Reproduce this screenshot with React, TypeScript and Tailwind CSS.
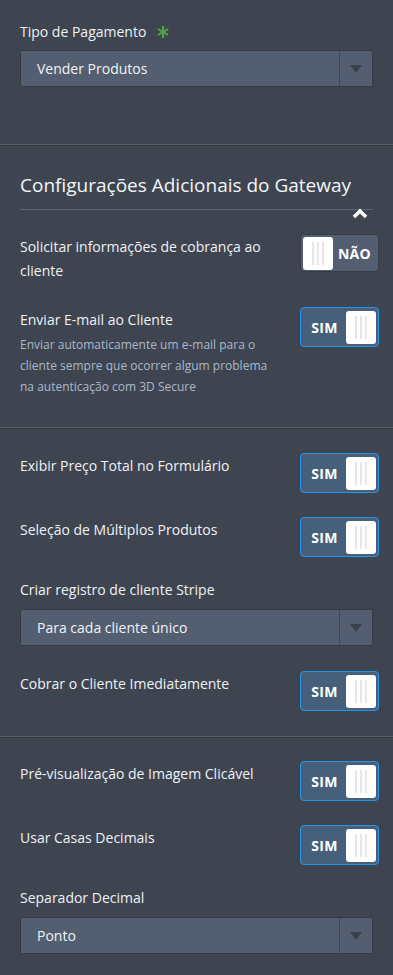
import React from "react";

const font = { fontFamily: "'Open Sans', 'Noto Sans', sans-serif" };

function Star() {
  return (
    <svg width="12" height="12" viewBox="0 0 12 12" className="ml-[11px] inline-block">
      <g stroke="#55a743" strokeWidth="2" strokeLinecap="square">
        <line x1="6" y1="1" x2="6" y2="11" />
        <line x1="1.7" y1="3.5" x2="10.3" y2="8.5" />
        <line x1="1.7" y1="8.5" x2="10.3" y2="3.5" />
      </g>
    </svg>
  );
}

function Select({ value }: { value: string }) {
  return (
    <div className="flex h-[37px] items-stretch rounded-[2px] border border-[#353b45] bg-[#535e70]">
      <div className="flex flex-1 items-center pl-4 text-[14px] text-[#f1f3f6]">{value}</div>
      <div className="flex w-[33px] items-center justify-center border-l border-[#3f4653]">
        <svg width="12" height="8" viewBox="0 0 12 8">
          <path d="M0 0h12L6 8z" fill="#39404a" />
        </svg>
      </div>
    </div>
  );
}

function Knob() {
  return (
    <div className="flex h-[33px] w-[30px] items-center justify-center gap-[3px] rounded-[3px] bg-white">
      <span className="h-[23px] w-[2px] bg-[#e6e6e6]" />
      <span className="h-[23px] w-[2px] bg-[#e6e6e6]" />
      <span className="h-[23px] w-[2px] bg-[#e6e6e6]" />
    </div>
  );
}

function Toggle({ on }: { on: boolean }) {
  if (on) {
    return (
      <div className="-mr-[6px] flex h-[40px] w-[79px] shrink-0 items-center rounded-[4px] border border-[#2596ea] bg-[#465f7b] p-[2px]">
        <span className="flex-1 text-center text-[14px] font-bold tracking-wide text-white">SIM</span>
        <Knob />
      </div>
    );
  }
  return (
    <div className="-mr-[6px] flex h-[38px] w-[79px] shrink-0 items-center rounded-[4px] border border-[#363c46] bg-[#535e70] p-[2px]">
      <Knob />
      <span className="flex-1 text-center text-[14px] font-bold tracking-wide text-white">NÃO</span>
    </div>
  );
}

function Row({ label, desc, on }: { label: string; desc?: string; on: boolean }) {
  return (
    <div className="flex items-start justify-between gap-4">
      <div className="mt-px flex-1">
        <div className="text-[14px] leading-6 text-[#eef1f5]">{label}</div>
        {desc && <div className="mt-[2px] text-[12px] leading-[21px] text-[#aab7cc]">{desc}</div>}
      </div>
      <Toggle on={on} />
    </div>
  );
}

function Divider() {
  return (
    <div>
      <div className="h-px bg-[#545c68]" />
      <div className="h-px bg-[#343a43]" />
    </div>
  );
}

export default function App() {
  return (
    <div className="min-h-[975px] w-[393px] bg-[#3e4551]" style={font}>
      <div className="px-5 pt-[22px] pb-[57px]">
        <div className="flex items-center text-[14px] leading-5 text-[#eef1f5]">
          Tipo de Pagamento
          <Star />
        </div>
        <div className="mt-2">
          <Select value="Vender Produtos" />
        </div>
      </div>
      <Divider />

      <div className="px-5 pt-[25px] pb-[30px]">
        <div className="relative border-b border-[#5a6575] pb-[10px]">
          <h2 className="text-[19px] leading-7 text-[#f3f5f8]">Configurações Adicionais do Gateway</h2>
          <svg width="16" height="11" viewBox="0 0 16 11" className="absolute -bottom-[10px] right-[5px]">
            <path d="M2 9l6-6 6 6" fill="none" stroke="#ffffff" strokeWidth="3.5" />
          </svg>
        </div>
        <div className="mt-[24px] flex flex-col gap-[24px]">
          <Row label="Solicitar informações de cobrança ao cliente" on={false} />
          <Row
            label="Enviar E-mail ao Cliente"
            desc="Enviar automaticamente um e-mail para o cliente sempre que ocorrer algum problema na autenticação com 3D Secure"
            on
          />
        </div>
      </div>
      <Divider />

      <div className="flex flex-col px-5 pt-[24px] pb-[25px]">
        <Row label="Exibir Preço Total no Formulário" on />
        <div className="mt-[24px]">
          <Row label="Seleção de Múltiplos Produtos" on />
        </div>
        <div className="mt-[21px] text-[14px] leading-6 text-[#eef1f5]">Criar registro de cliente Stripe</div>
        <div className="mt-[7px]">
          <Select value="Para cada cliente único" />
        </div>
        <div className="mt-[25px]">
          <Row label="Cobrar o Cliente Imediatamente" on />
        </div>
      </div>
      <Divider />

      <div className="flex flex-col px-5 pt-[23px] pb-[21px]">
        <Row label="Pré-visualização de Imagem Clicável" on />
        <div className="mt-[24px]">
          <Row label="Usar Casas Decimais" on />
        </div>
        <div className="mt-[21px] text-[14px] leading-6 text-[#eef1f5]">Separador Decimal</div>
        <div className="mt-[7px]">
          <Select value="Ponto" />
        </div>
      </div>
    </div>
  );
}
